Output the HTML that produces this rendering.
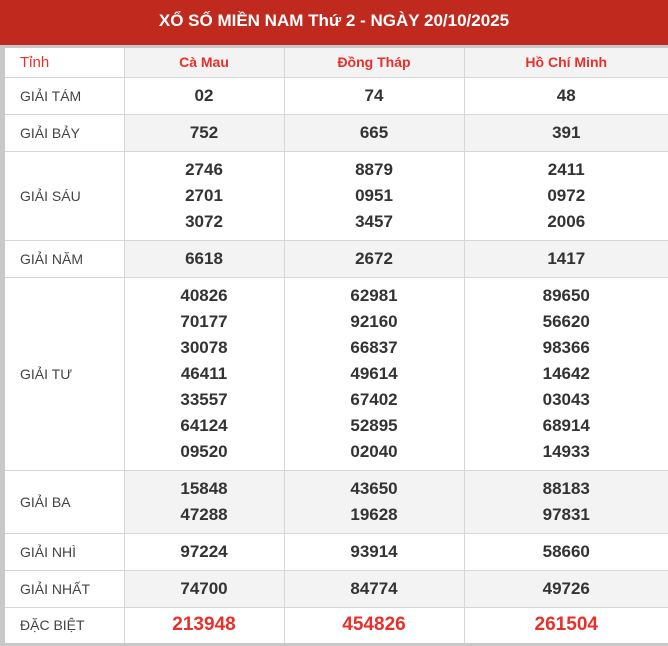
<!DOCTYPE html>
<html><head><meta charset="utf-8"><style>
*{margin:0;padding:0;box-sizing:border-box}
body{width:668px;height:646px;background:#fff;font-family:"Liberation Sans",Arial,sans-serif;position:relative;overflow:hidden}
.hd{position:absolute;left:0;top:0;width:668px;height:45px;background:#c0291e;color:#fff;font-weight:bold;font-size:17px;text-align:center;line-height:42px}
.bar{position:absolute;left:0;top:45px;width:668px;height:3px;background:#c8c8c8}
.lb{position:absolute;left:0;top:45px;width:5px;height:601px;background:#c8c8c8}
.bb{position:absolute;left:0;top:643px;width:668px;height:3px;background:#c8c8c8}
table{position:absolute;left:5px;top:48px;border-collapse:collapse;table-layout:fixed;width:663px}
td{border-bottom:1px solid #d6d6d6;border-right:1px solid #d6d6d6;text-align:center;color:#333;font-weight:bold;font-size:17px;line-height:26px;vertical-align:middle}
td:last-child{border-right:none}
td.l{text-align:left;padding-left:15px;font-weight:normal;font-size:14px;color:#444;background:#fff}
tr.g td{background:#f3f3f3}
tr.g td.l{background:#fff}
tr.h td{color:#e8302a;font-size:14px;line-height:normal;height:29px}
tr.h td.l{font-weight:normal;color:#e8302a;font-size:15px;line-height:normal}
.r{color:#e8302a;font-size:19px}
</style></head><body>
<div class="hd">XỔ SỐ MIỀN NAM Thứ 2 - NGÀY 20/10/2025</div>
<div class="bar"></div><div class="lb"></div>
<table>
<col style="width:119px"><col style="width:160px"><col style="width:180px"><col style="width:204px">
<tr class="h g" style="height:29px"><td class="l">Tỉnh</td><td>Cà Mau</td><td>Đồng Tháp</td><td>Hồ Chí Minh</td></tr>
<tr style="height:37px"><td class="l">GIẢI TÁM</td><td>02</td><td>74</td><td>48</td></tr>
<tr class="g" style="height:37px"><td class="l">GIẢI BẢY</td><td>752</td><td>665</td><td>391</td></tr>
<tr style="height:89px"><td class="l">GIẢI SÁU</td><td>2746<br>2701<br>3072</td><td>8879<br>0951<br>3457</td><td>2411<br>0972<br>2006</td></tr>
<tr class="g" style="height:37px"><td class="l">GIẢI NĂM</td><td>6618</td><td>2672</td><td>1417</td></tr>
<tr style="height:193px"><td class="l">GIẢI TƯ</td><td>40826<br>70177<br>30078<br>46411<br>33557<br>64124<br>09520</td><td>62981<br>92160<br>66837<br>49614<br>67402<br>52895<br>02040</td><td>89650<br>56620<br>98366<br>14642<br>03043<br>68914<br>14933</td></tr>
<tr class="g" style="height:63px"><td class="l">GIẢI BA</td><td>15848<br>47288</td><td>43650<br>19628</td><td>88183<br>97831</td></tr>
<tr style="height:37px"><td class="l">GIẢI NHÌ</td><td>97224</td><td>93914</td><td>58660</td></tr>
<tr class="g" style="height:37px"><td class="l">GIẢI NHẤT</td><td>74700</td><td>84774</td><td>49726</td></tr>
<tr style="height:36px"><td class="l">ĐẶC BIỆT</td><td class="r">213948</td><td class="r">454826</td><td class="r">261504</td></tr>
</table>
<div class="bb"></div>
</body></html>
